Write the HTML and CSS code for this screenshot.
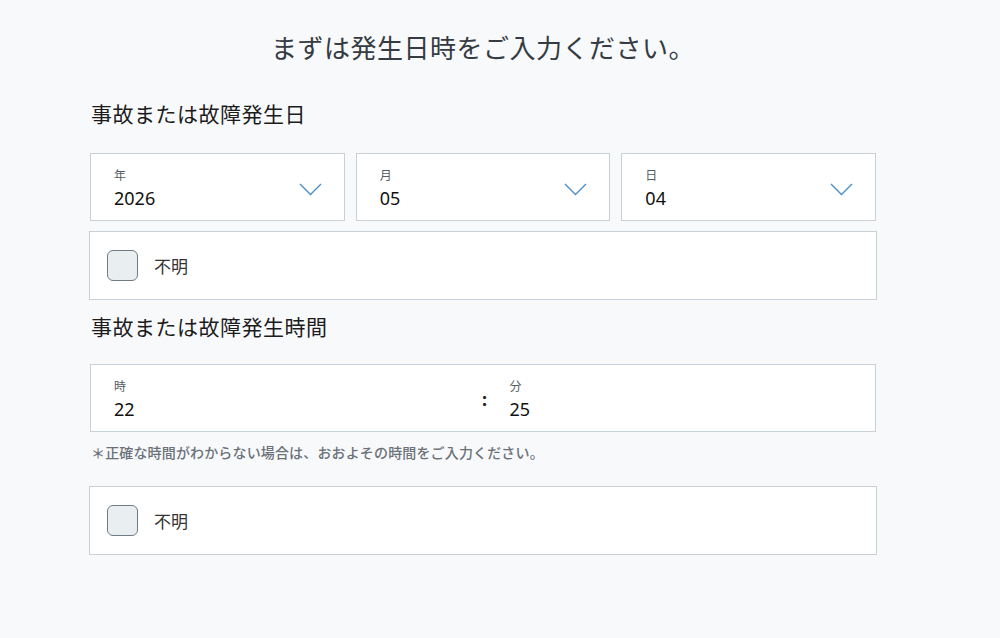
FILE: index.html
```html
<!DOCTYPE html>
<html lang="ja">
<head>
<meta charset="UTF-8">
<meta name="viewport" content="width=device-width, initial-scale=1.0">
<title>発生日時入力</title>
<link rel="stylesheet" href="styles.css">
</head>
<body>
    <div class="page">
        <h1 class="title">まずは発生日時をご入力ください。</h1>

        <h2 class="heading heading-date">事故または故障発生日</h2>
        <div class="selects">
            <div class="select">
                <div class="field">
                    <span class="label">年</span>
                    <span class="value">2026</span>
                </div>
                <svg class="chevron" width="23" height="13" viewBox="0 0 23 13"><polyline points="1,1 11.5,11.5 22,1" fill="none" stroke="#4a8fc9" stroke-width="1.4"/></svg>
            </div>
            <div class="select">
                <div class="field">
                    <span class="label">月</span>
                    <span class="value">05</span>
                </div>
                <svg class="chevron" width="23" height="13" viewBox="0 0 23 13"><polyline points="1,1 11.5,11.5 22,1" fill="none" stroke="#4a8fc9" stroke-width="1.4"/></svg>
            </div>
            <div class="select">
                <div class="field">
                    <span class="label">日</span>
                    <span class="value">04</span>
                </div>
                <svg class="chevron" width="23" height="13" viewBox="0 0 23 13"><polyline points="1,1 11.5,11.5 22,1" fill="none" stroke="#4a8fc9" stroke-width="1.4"/></svg>
            </div>
        </div>
        <label class="check">
            <span class="box"></span>
            <span class="check-text">不明</span>
        </label>

        <h2 class="heading heading-time">事故または故障発生時間</h2>
        <div class="time">
            <div class="field time-hour">
                <span class="label">時</span>
                <span class="value">22</span>
            </div>
            <span class="colon">:</span>
            <div class="field time-min">
                <span class="label">分</span>
                <span class="value">25</span>
            </div>
        </div>
        <p class="note">＊正確な時間がわからない場合は、おおよその時間をご入力ください。</p>
        <label class="check check-time">
            <span class="box"></span>
            <span class="check-text">不明</span>
        </label>
    </div>
</body>
</html>
```

FILE: styles.css
```css
body {
    margin: 0;
    background: #f8f9fb;
    font-family: "Noto Sans", "Noto Sans CJK JP", sans-serif;
    color: #222;
}
.page {
    width: 786px;
    margin-left: 90px;
    padding-top: 30px;
}
.title {
    margin: 0;
    font-size: 26px;
    line-height: 36px;
    font-weight: 400;
    color: #353b42;
    text-align: center;
    letter-spacing: 0.5px;
}
.heading {
    margin: 0;
    font-size: 21px;
    line-height: 30px;
    font-weight: 400;
    color: #1c1c1c;
    padding-left: 1px;
    letter-spacing: 0.5px;
}
.heading-date {
    margin-top: 33px;
}
.heading-time {
    margin-top: 12px;
}
.selects {
    display: flex;
    gap: 11px;
    margin-top: 24px;
}
.select {
    flex: 1;
    display: flex;
    align-items: center;
    justify-content: space-between;
    height: 66px;
    background: #fff;
    border: 1px solid #c9d0d6;
}
.field {
    display: flex;
    flex-direction: column;
    padding: 0 0 0 23px;
    margin-top: 4px;
}
.label {
    font-size: 12px;
    line-height: 16px;
    color: #555c63;
}
.value {
    margin-top: 2px;
    font-size: 18px;
    line-height: 24px;
    color: #111;
}
.chevron {
    margin-right: 22px;
    margin-top: 4px;
}
.check {
    display: flex;
    align-items: center;
    gap: 16px;
    height: 67px;
    margin: 10px -1px 0;
    padding-left: 17px;
    background: #fff;
    border: 1px solid #c9d0d6;
}
.box {
    width: 29px;
    height: 29px;
    border: 1.5px solid #6f7b85;
    border-radius: 6px;
    background: #e9eef0;
}
.check-text {
    font-size: 17px;
    color: #333;
}
.time {
    display: flex;
    align-items: center;
    height: 66px;
    margin-top: 22px;
    background: #fff;
    border: 1px solid #c9d0d6;
}
.time .field {
    flex: 1;
}
.time-min {
    padding-left: 20px;
}
.colon {
    width: 10px;
    text-align: center;
    font-size: 18px;
    font-weight: 700;
    color: #222;
    margin-top: 2px;
}
.note {
    margin: 11px 0 0;
    font-size: 14px;
    line-height: 20px;
    color: #6b7178;
    font-weight: 500;
    padding-left: 1px;
    letter-spacing: 0.15px;
}
.check-time {
    margin-top: 23px;
}
```
